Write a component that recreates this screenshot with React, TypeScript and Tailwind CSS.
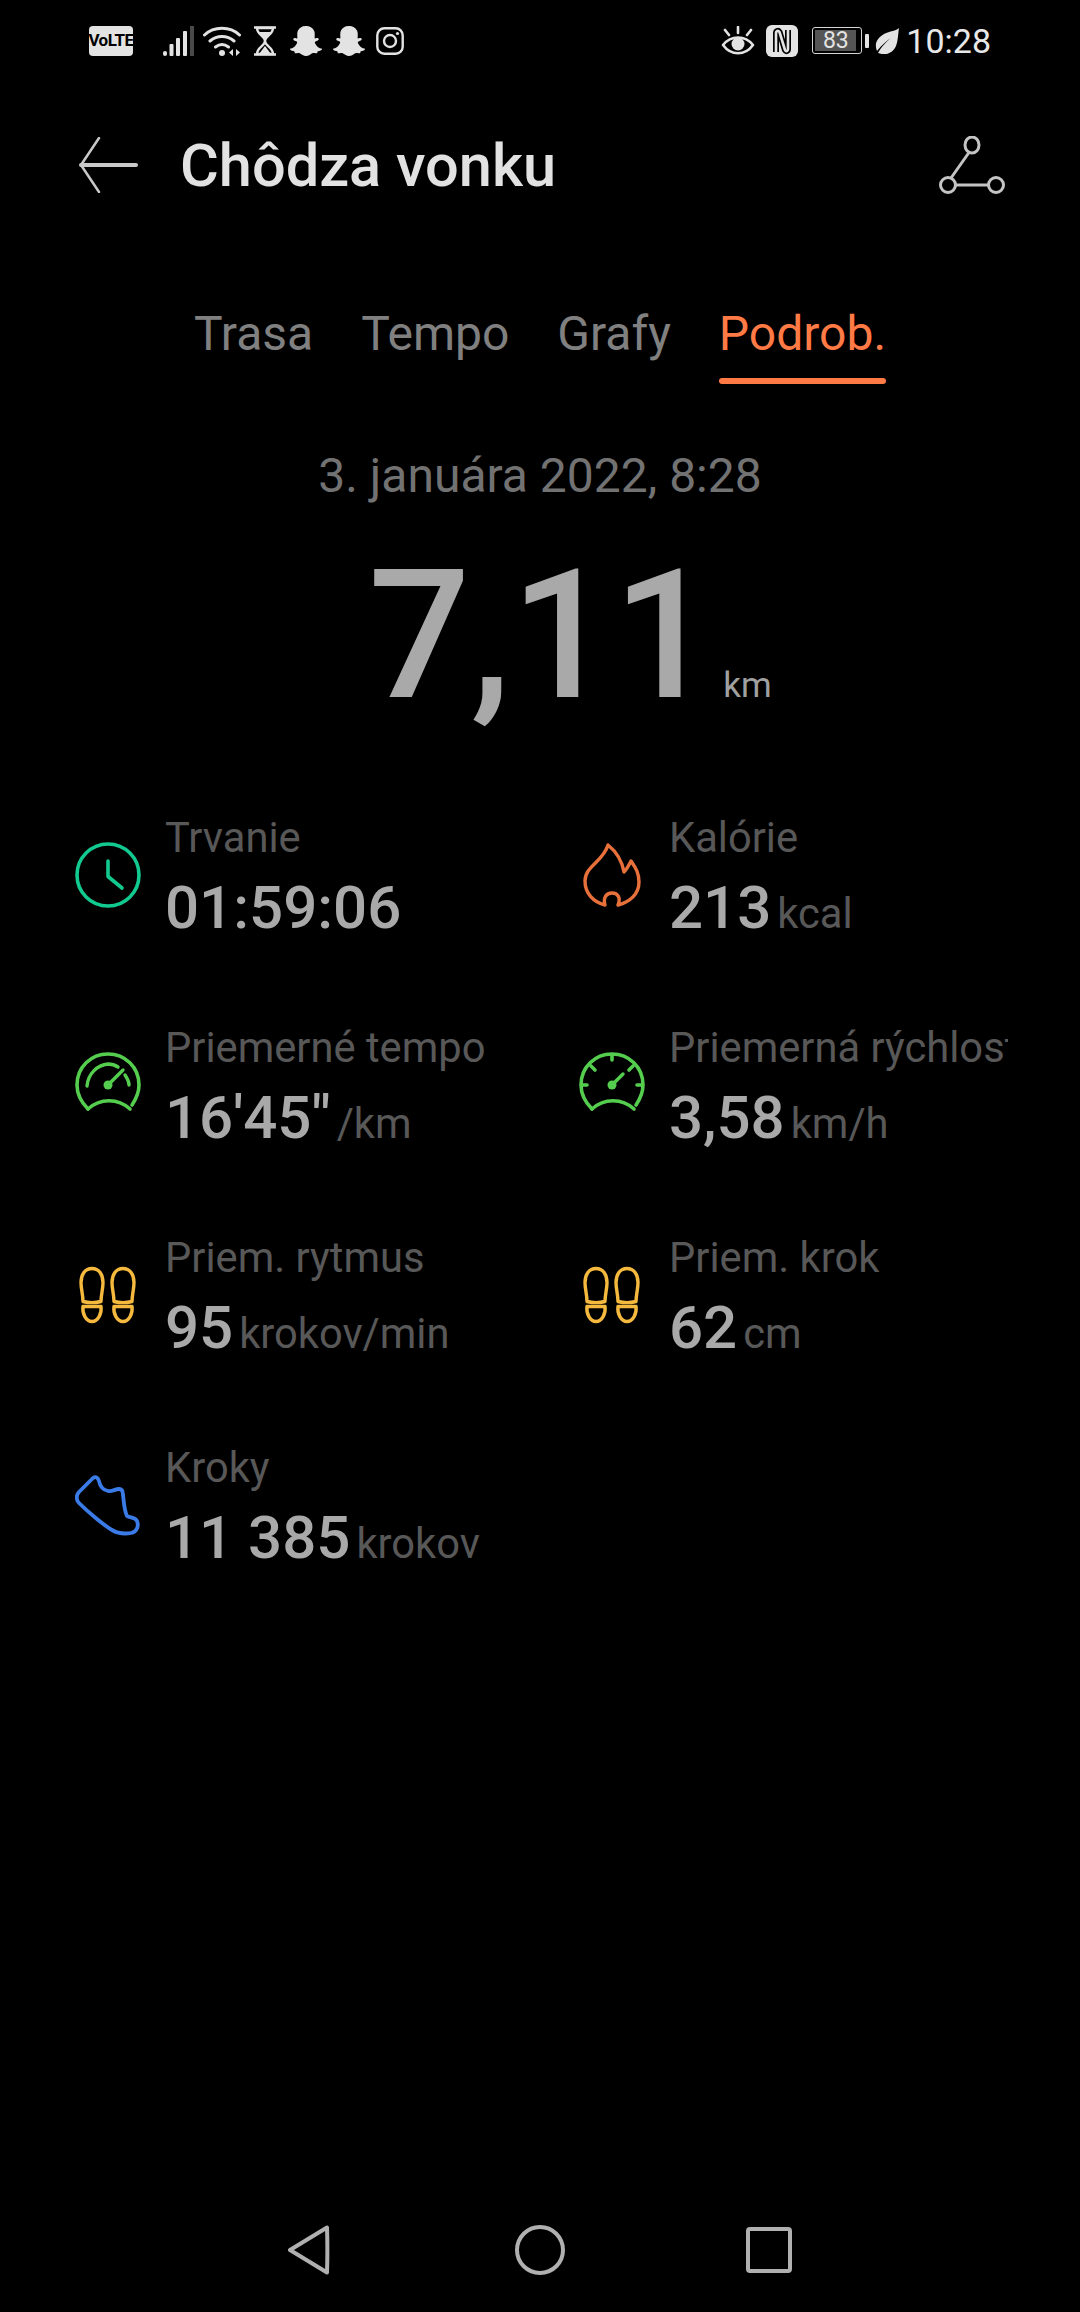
import React from "react";
import { FaSnapchatGhost } from "react-icons/fa";

const Sb = ({ w, h, children, className = "" }: { w: number; h: number; children: React.ReactNode; className?: string }) => (
  <svg width={w} height={h} viewBox={`0 0 ${w} ${h}`} fill="none" className={`block shrink-0 ${className}`}>{children}</svg>
);

const Clock = () => (
  <Sb w={66} h={66}>
    <circle cx="33" cy="33" r="31" stroke="#12c98f" strokeWidth="3.6" />
    <path d="M33 19v15.500L47 46" stroke="#12c98f" strokeWidth="3.6" strokeLinecap="round" strokeLinejoin="round" />
  </Sb>
);
const Flame = () => (
  <Sb w={66} h={66}>
    <path d="M29 3C34 7 42 14 45 30C48 27 50 23 52 19C56 25 60 30 60 40C60 52 51 60 39 63C42 56 39 51 33 51C27 51 24 56 26 63C14 60 6 51 6 39C6 24 24 20 29 3Z" stroke="#e8703a" strokeWidth="3.4" strokeLinejoin="round" strokeLinecap="round" />
  </Sb>
);
const GaugeA = () => (
  <Sb w={66} h={66}>
    <path d="M13 57C6 50 2 42 2 33C2 15 16 2 33 2C50 2 64 15 64 33C64 40 61 47 57 53" stroke="#55cd4e" strokeWidth="3.6" strokeLinecap="round" />
    <path d="M13 57C25 46 43 46 55 57" stroke="#55cd4e" strokeWidth="3.6" strokeLinecap="round" />
    <path d="M12 34C13 22 22 13 33 12C37 12 40 13 43 15" stroke="#55cd4e" strokeWidth="3.4" strokeLinecap="round" />
    <path d="M50 23C52 26 54 29 54 33" stroke="#55cd4e" strokeWidth="3.4" strokeLinecap="round" />
    <circle cx="33" cy="33" r="4.500" fill="#55cd4e" />
    <path d="M33 33L48 18" stroke="#55cd4e" strokeWidth="3.4" strokeLinecap="round" />
  </Sb>
);
const GaugeB = () => (
  <Sb w={66} h={66}>
    <path d="M13 57C6 50 2 42 2 33C2 15 16 2 33 2C50 2 64 15 64 33C64 40 61 47 57 53" stroke="#55cd4e" strokeWidth="3.6" strokeLinecap="round" />
    <path d="M13 57C25 46 43 46 55 57" stroke="#55cd4e" strokeWidth="3.6" strokeLinecap="round" />
    <path d="M33 3v5M3 33h5M58 33h5M12 14l4 4M54 14l-4 4" stroke="#55cd4e" strokeWidth="3.6" strokeLinecap="round" />
    <circle cx="33" cy="33" r="4.500" fill="#55cd4e" />
    <path d="M33 33L44 22" stroke="#55cd4e" strokeWidth="3.4" strokeLinecap="round" />
  </Sb>
);
const Feet = () => (
  <Sb w={66} h={66}>
    <g stroke="#f5b93e" strokeWidth="3.4" strokeLinejoin="round">
      <path d="M17 6.500c7 0 11 6 11 14 0 7-2 12-2 19-6 1.500-12 1.500-18 0 0-7-2-12-2-19 0-8 4-14 11-14Z" />
      <path d="M8 44.500h18c1 7-3 15-9 15s-10-8-9-15Z" />
      <path d="M48 6.500c7 0 11 6 11 14 0 7-2 12-2 19-6 1.500-12 1.500-18 0 0-7-2-12-2-19 0-8 4-14 11-14Z" />
      <path d="M39 44.500h18c1 7-3 15-9 15s-10-8-9-15Z" />
    </g>
  </Sb>
);
const Shoe = () => (
  <Sb w={66} h={66}>
    <path d="M18 6C21 4 23 6 24 9C25 14 28 18 33 19C37 20 40 17 44 17C47 17 48 20 48 23C49 30 49 38 52 44C55 46 60 45 62 49C64 54 62 60 56 61C50 62 42 61 37 58C30 54 14 41 4 31C1 28 1 23 4 20Z" stroke="#3b7be8" strokeWidth="3.8" strokeLinejoin="round" />
  </Sb>
);

type Item = { icon: React.ReactNode; label: string; value: string; unit?: string };
const items: Item[] = [
  { icon: <Clock />, label: "Trvanie", value: "01:59:06" },
  { icon: <Flame />, label: "Kalórie", value: "213", unit: "kcal" },
  { icon: <GaugeA />, label: "Priemerné tempo", value: "16'45\"", unit: "/km" },
  { icon: <GaugeB />, label: "Priemerná rýchlosť", value: "3,58", unit: "km/h" },
  { icon: <Feet />, label: "Priem. rytmus", value: "95", unit: "krokov/min" },
  { icon: <Feet />, label: "Priem. krok", value: "62", unit: "cm" },
  { icon: <Shoe />, label: "Kroky", value: "11 385", unit: "krokov" },
];

const Stat = ({ icon, label, value, unit }: Item) => (
  <div className="flex items-start gap-[24px]">
    <div className="mt-[34px] shrink-0">{icon}</div>
    <div className="min-w-0 flex-1 pt-[5px] whitespace-nowrap">
      <div className="h-[50px] leading-[50px] text-[41.7px] text-[#585858] overflow-x-clip">{label}</div>
      <div className="mt-[8px] h-[74px] leading-[74px] flex items-baseline gap-[6px]">
        <span className="text-[60px] font-medium text-[#a9a9a9]">{value}</span>
        {unit && <span className="text-[41.7px] text-[#585858]">{unit}</span>}
      </div>
    </div>
  </div>
);

const StatusBar = () => (
  <div className="h-[80px] flex items-center justify-between pl-[89px] pr-[89px] pt-[1px]">
    <div className="flex items-center">
      <div className="w-[44px] h-[30px] rounded-[4px] bg-[#e3e3e3] flex items-center justify-center text-[17px] font-bold leading-none text-black tracking-[-0.5px]">VoLTE</div>
      <Sb w={33} h={30} className="ml-[28px]">
        <rect x="2" y="25" width="4" height="5" rx="2" fill="#e3e3e3" />
        <rect x="8.500" y="18" width="4" height="12" rx="1" fill="#e3e3e3" />
        <rect x="15" y="12" width="4" height="18" rx="1" fill="#e3e3e3" />
        <rect x="22" y="5" width="4" height="25" rx="1" fill="#e3e3e3" />
        <rect x="29" y="0" width="4" height="30" fill="#4a4a4a" />
      </Sb>
      <Sb w={38} h={30} className="ml-[9px]">
        <path d="M1.500 9C11 0 27 0 36.500 9M7 15c7-6 17-6 24 0M12.500 21c4-3 9-3 13 0" stroke="#e3e3e3" strokeWidth="3" strokeLinecap="round" />
        <circle cx="19" cy="27" r="3" fill="#e3e3e3" />
        <path d="M30 23v7l-4-3.500ZM33 23v7l4-3.500Z" fill="#e3e3e3" />
      </Sb>
      <Sb w={24} h={30} className="ml-[12px]">
        <path d="M1 1.500h22M1 28.500h22" stroke="#e3e3e3" strokeWidth="2.400" />
        <path d="M4 2c0 7 8 8 8 13s-8 6-8 13h16c0-7-8-8-8-13s8-6 8-13Z" stroke="#e3e3e3" strokeWidth="2.400" />
        <path d="M5 6h14l-7 8ZM12 20l6 8H6Z" fill="#e3e3e3" />
      </Sb>
      <FaSnapchatGhost className="ml-[13px] shrink-0 text-[#e3e3e3]" size={32} />
      <FaSnapchatGhost className="ml-[11px] shrink-0 text-[#e3e3e3]" size={32} />
      <Sb w={28} h={28} className="ml-[11px]">
        <rect x="1.300" y="1.300" width="25.400" height="25.400" rx="7" stroke="#e3e3e3" strokeWidth="2.400" />
        <circle cx="14" cy="14" r="6" stroke="#e3e3e3" strokeWidth="2.400" />
        <circle cx="21.500" cy="6.500" r="1.600" fill="#e3e3e3" />
      </Sb>
    </div>
    <div className="flex items-center">
      <Sb w={34} h={30}>
        <path d="M2 19c8-10 22-10 30 0-8 11-22 11-30 0Z" stroke="#e3e3e3" strokeWidth="2.600" strokeLinejoin="round" />
        <circle cx="17" cy="18" r="6.500" fill="#e3e3e3" />
        <path d="M17 1v6M4 4l4 5M30 4l-4 5" stroke="#e3e3e3" strokeWidth="2.600" strokeLinecap="round" />
      </Sb>
      <Sb w={32} h={32} className="ml-[11px]">
        <rect width="32" height="32" rx="6" fill="#e3e3e3" />
        <path d="M10 27V8c0-2 2-3 3.500-1L19 25c1 2 3 1 3-1V5" stroke="#000" strokeWidth="6" strokeLinejoin="round" />
        <path d="M10 27V8c0-2 2-3 3.500-1L19 25c1 2 3 1 3-1V5" stroke="#e3e3e3" strokeWidth="2.600" strokeLinejoin="round" />
      </Sb>
      <div className="ml-[14px] w-[50px] h-[27px] rounded-[3px] border-[1.5px] border-[#d5d5d5] p-[2px]">
        <div className="w-[41px] h-full bg-[#555555] flex items-center justify-center text-[23px] leading-none text-[#e3e3e3]">83</div>
      </div>
      <div className="ml-[3px] w-[4px] h-[14px] rounded-[1px] bg-[#e3e3e3]" />
      <Sb w={24} h={26} className="ml-[6px]">
        <path d="M24 0C21 3 15 3 9 6 2 10-1 16 2 23 7 17 11 13 16 10 11 14 7 18 3 25c8 3 15 0 18-7 2-5 2-12 3-18Z" fill="#e3e3e3" />
      </Sb>
      <span className="ml-[7px] text-[34px] leading-none text-[#e8e8e8]">10:28</span>
    </div>
  </div>
);

const NavBar = () => (
  <div className="absolute bottom-[37px] left-0 right-0 h-[50px]">
    <div className="flex items-center h-full pl-[288px]">
      <Sb w={42} h={50}>
        <path d="M2 25 39 2.500c.5 15 .5 30 0 45Z" stroke="#b0b0b0" strokeWidth="4" strokeLinejoin="round" />
      </Sb>
      <Sb w={50} h={50} className="ml-[185px]">
        <circle cx="25" cy="25" r="23" stroke="#b0b0b0" strokeWidth="4" />
      </Sb>
      <Sb w={46} h={46} className="ml-[181px]">
        <rect x="2" y="2" width="42" height="42" rx="2" stroke="#b0b0b0" strokeWidth="4" />
      </Sb>
    </div>
  </div>
);

export default function App() {
  return (
    <div className="relative w-[1080px] h-[2312px] bg-black overflow-hidden font-['Roboto',sans-serif]">
      <StatusBar />
      <div className="h-[90px] mt-[40px] flex items-center justify-between pl-[78px] pr-[75px]">
        <div className="flex items-center gap-[42px]">
          <Sb w={60} h={56}>
            <path d="M58 28H3" stroke="#c9c9c9" strokeWidth="4" strokeLinecap="round" />
            <path d="M21 1L3 28l18 27" stroke="#c9c9c9" strokeWidth="2.500" strokeLinecap="round" strokeLinejoin="round" />
          </Sb>
          <h1 className="text-[59.5px] font-medium text-[#e2e2e2] leading-none pt-[3px]">Chôdza vonku</h1>
        </div>
        <Sb w={66} h={58}>
          <g stroke="#c4c4c4" strokeWidth="3">
            <ellipse cx="33" cy="9" rx="7" ry="8" />
            <circle cx="9" cy="49" r="7.500" />
            <circle cx="57" cy="49" r="7.500" />
            <path d="M30 16.500 12 42M16.500 49h33" />
          </g>
        </Sb>
      </div>
      <div className="mt-[94px] flex justify-center gap-[48px] text-[48px] leading-[60px] text-[#808080]">
        <span>Trasa</span>
        <span>Tempo</span>
        <span>Grafy</span>
        <span className="relative text-[#ff7a45]">
          Podrob.
          <span className="absolute left-0 right-0 top-[74px] h-[6px] rounded-full bg-[#ff7a45]" />
        </span>
      </div>
      <div className="mt-[82px] text-center text-[48px] leading-[60px] text-[#727272]">3. januára 2022, 8:28</div>
      <div className="mt-[30px] h-[200px] flex items-baseline justify-center gap-[8px] pl-[60px]">
        <span className="text-[180px] font-medium leading-[200px] text-[#a9a9a9]">7,11</span>
        <span className="text-[35px] text-[#a0a0a0]">km</span>
      </div>
      <div className="mt-[72px] ml-[75px] w-[933px] grid grid-cols-[504px_429px] gap-y-[73px]">
        {items.map((it) => (
          <Stat key={it.label} {...it} />
        ))}
      </div>
      <NavBar />
    </div>
  );
}
